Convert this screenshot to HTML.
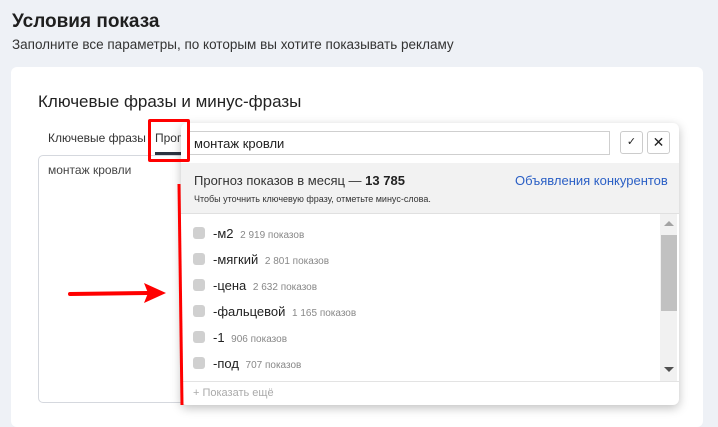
<!DOCTYPE html>
<html><head><meta charset="utf-8"><style>
*{box-sizing:border-box;margin:0;padding:0}
body{width:718px;height:418px;overflow:hidden;background:#eef1f6;font-family:"Liberation Sans","DejaVu Sans",sans-serif;color:#222;position:relative}
.a{position:absolute}
.r{height:26px;line-height:26px;white-space:nowrap}
.c{display:inline-block;width:12px;height:12px;background:#d0d0d0;border-radius:3px;vertical-align:-1px;margin-right:8px}
.n{font-size:10px;color:#888;margin-left:3px}
</style></head><body>
<div class="a" style="left:12px;top:11px;font-size:19px;font-weight:bold;color:#1f1f1f">Условия показа</div>
<div class="a" style="left:12px;top:37px;font-size:13.5px;color:#333">Заполните все параметры, по которым вы хотите показывать рекламу</div>
<div class="a" style="left:11px;top:67px;width:692px;height:360px;background:#fff;border-radius:6px"></div>
<div class="a" style="left:38px;top:92px;font-size:17px;color:#222">Ключевые фразы и минус-фразы</div>
<div class="a" style="left:48px;top:131px;font-size:12px;color:#333">Ключевые фразы</div>
<div class="a" style="left:155px;top:131px;font-size:12px;color:#333">Прог</div>
<div class="a" style="left:155px;top:152px;width:27px;height:3px;background:#2c3340"></div>
<div class="a" style="left:38px;top:155px;width:150px;height:248px;border:1px solid #d5d8de;border-radius:5px"></div>
<div class="a" style="left:48px;top:163px;font-size:12px;color:#444">монтаж кровли</div>
<div class="a" style="left:181px;top:123px;width:498px;height:282px;background:#fff;border-radius:6px;box-shadow:0 3px 10px rgba(0,0,0,.25);overflow:hidden">
 <div class="a" style="left:6px;top:8px;width:423px;height:24px;border:1px solid #cfcfcf;font-size:13px;padding:4px 6px;color:#222">монтаж кровли</div>
 <div class="a" style="left:439px;top:8px;width:23px;height:23px;border:1px solid #ccc;border-radius:3px;font-size:11px;text-align:center;line-height:21px">✓</div>
 <div class="a" style="left:466px;top:8px;width:23px;height:23px;border:1px solid #ccc;border-radius:3px;font-size:14px;font-weight:bold;text-align:center;line-height:21px">✕</div>
 <div class="a" style="left:0;top:40px;width:498px;height:51px;background:#f2f2f2;border-bottom:1px solid #e0e0e0"></div>
 <div class="a" style="left:13px;top:50px;font-size:13px;color:#333">Прогноз показов в месяц — <b style="color:#222">13 785</b></div>
 <div class="a" style="left:334px;top:50px;font-size:13px;color:#2a5fc5">Объявления конкурентов</div>
 <div class="a" style="left:13px;top:71px;font-size:9px;color:#333">Чтобы уточнить ключевую фразу, отметьте минус-слова.</div>
 <div class="a" style="left:479px;top:91px;width:17px;height:167px;background:#f1f1f1"></div>
 <div class="a" style="left:480px;top:112px;width:16px;height:76px;background:#c1c1c1"></div>
 <div class="a" style="left:483px;top:98px;width:0;height:0;border-left:5px solid transparent;border-right:5px solid transparent;border-bottom:5px solid #a3a3a3"></div>
 <div class="a" style="left:483px;top:244px;width:0;height:0;border-left:5px solid transparent;border-right:5px solid transparent;border-top:5px solid #505050"></div>
 <div class="a" style="left:0;top:258px;width:498px;height:1px;background:#e3e3e3"></div>
 <div class="a" style="left:12px;top:264px;font-size:11px;color:#aaa">+ Показать ещё</div>
</div>
<div class="a" style="left:193px;top:221px;font-size:13px;color:#222">
<div class="r"><span class="c"></span>-м2 <span class="n">2 919 показов</span></div>
<div class="r"><span class="c"></span>-мягкий <span class="n">2 801 показов</span></div>
<div class="r"><span class="c"></span>-цена <span class="n">2 632 показов</span></div>
<div class="r"><span class="c"></span>-фальцевой <span class="n">1 165 показов</span></div>
<div class="r"><span class="c"></span>-1 <span class="n">906 показов</span></div>
<div class="r"><span class="c"></span>-под <span class="n">707 показов</span></div>
</div>
<div class="a" style="left:148px;top:119px;width:42px;height:43px;border:3px solid #f00;border-radius:2px"></div>
<svg class="a" style="left:0;top:0" width="718" height="418">
<line x1="179" y1="184" x2="182" y2="405" stroke="#f00" stroke-width="3"/>
<line x1="70" y1="294" x2="148" y2="293" stroke="#f00" stroke-width="4" stroke-linecap="round"/>
<polygon points="144,283 166,293 144,303 148,293" fill="#f00"/>
</svg>
</body></html>
